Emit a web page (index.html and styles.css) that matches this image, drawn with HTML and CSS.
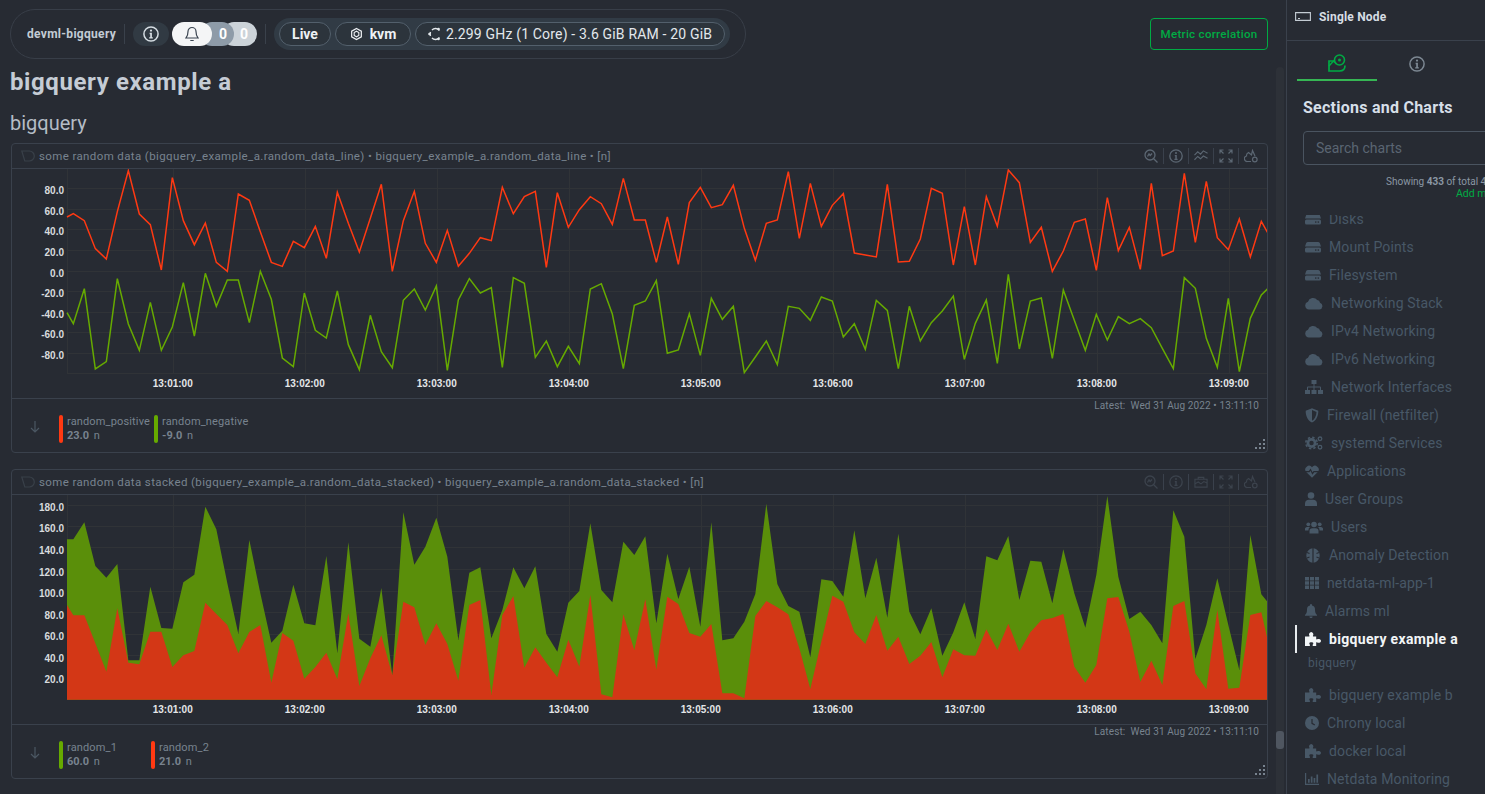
FILE: index.html
```html
<!DOCTYPE html>
<html lang="en">
<head>
<meta charset="utf-8">
<title>bigquery example a</title>
<link rel="stylesheet" href="styles.css">
</head>
<body>
<svg class="defs" width="0" height="0" aria-hidden="true">
  <defs>
    <symbol id="i-disk" viewBox="0 0 16 11"><path d="M3 0h10q1.2 0 1.8 1L16 4.6H0L1.2 1Q1.8 0 3 0zM1.5 5.6h13A1.5 1.5 0 0 1 16 7.1v2a1.5 1.5 0 0 1-1.5 1.5h-13A1.5 1.5 0 0 1 0 9.1v-2a1.5 1.5 0 0 1 1.5-1.5z"/><circle class="cut" cx="10.8" cy="8.1" r=".8"/><circle class="cut" cx="13.3" cy="8.1" r=".8"/></symbol>
    <symbol id="i-cloud" viewBox="0 0 18 13"><path d="M4 12.6A4 4 0 0 1 3 4.8 5.2 5.2 0 0 1 12.2 3 3.3 3.3 0 0 1 15 5.8a3.5 3.5 0 0 1-.7 6.8z"/></symbol>
    <symbol id="i-net" viewBox="0 0 18 14"><path d="M6.5 0h5v4h-2v2.5H15a1 1 0 0 1 1 1V10h2v4h-5v-4h2V7.5H9.5V10h2v4h-5v-4h2V7.5H3V10h2v4H0v-4h2V7.5a1 1 0 0 1 1-1h5.500V4h-2z"/></symbol>
    <symbol id="i-shield" viewBox="0 0 14 15"><path d="M7 .3l6.300 2.400C13.500 8 11 12.600 7 14.600 3 12.600.5 8 .7 2.700zM7 2v10.800c2.600-1.600 4.400-5 4.500-8.900z"/></symbol>
    <symbol id="i-cogs" viewBox="0 0 18 14"><circle cx="6.500" cy="7" r="3.600" fill="none" stroke="currentColor" stroke-width="2.700"/><circle cx="6.500" cy="7" r="5.700" fill="none" stroke="currentColor" stroke-width="1.600" stroke-dasharray="2.400 2.080"/><circle cx="15" cy="2.800" r="1.800" fill="none" stroke="currentColor" stroke-width="1.300"/><circle cx="15" cy="11.200" r="1.800" fill="none" stroke="currentColor" stroke-width="1.300"/></symbol>
    <symbol id="i-heart" viewBox="0 0 14 13"><path d="M7 12.800L1.200 7A3.700 3.700 0 0 1 7 2.200 3.700 3.700 0 0 1 12.800 7z"/><path class="cutline" d="M0 6.600h4.200l1.300-2 2 4 1.400-2H14"/></symbol>
    <symbol id="i-user" viewBox="0 0 12 14"><circle cx="6" cy="3.500" r="3.300"/><path d="M0 14v-2.500a4 4 0 0 1 4-3.700h4a4 4 0 0 1 4 3.700V14z"/></symbol>
    <symbol id="i-users" viewBox="0 0 18 13"><circle cx="9" cy="3.500" r="2.800"/><circle cx="3.300" cy="3.300" r="1.900"/><circle cx="14.700" cy="3.300" r="1.900"/><path d="M4.500 12.500v-2A3 3 0 0 1 7.500 7.300h3a3 3 0 0 1 3 3.200v2zM0 9.500A2.500 2.500 0 0 1 2.500 6H5a4 4 0 0 0-1.500 3.500H0zM18 9.500A2.500 2.500 0 0 0 15.500 6H13a4 4 0 0 1 1.500 3.500H18z"/></symbol>
    <symbol id="i-brain" viewBox="0 0 16 15"><path d="M7.400.3v14.400A7.300 7.300 0 0 1 7.400.3zM8.600.3a7.300 7.300 0 0 1 0 14.400z"/><path class="cutline" d="M2 4.500l2.500 1M2 10l2.500-1M14 4.500l-2.500 1M14 10l-2.500-1"/></symbol>
    <symbol id="i-grid" viewBox="0 0 14 12"><path d="M0 0h4v3.500H0zM5 0h4v3.500H5zM10 0h4v3.500h-4zM0 4.250h4v3.500H0zM5 4.250h4v3.500H5zM10 4.250h4v3.500h-4zM0 8.500h4V12H0zM5 8.500h4V12H5zM10 8.500h4V12h-4z"/></symbol>
    <symbol id="i-bell" viewBox="0 0 12 14"><path d="M6 0a1 1 0 0 1 1 1v.6A4 4 0 0 1 10 5.500c0 3 .7 4.300 2 5.500v.8H0V11c1.300-1.200 2-2.500 2-5.500a4 4 0 0 1 3-3.900V1a1 1 0 0 1 1-1zM4.400 12.500h3.200a1.600 1.600 0 0 1-3.200 0z"/></symbol>
    <symbol id="i-puzzle" viewBox="0 0 16 14"><path d="M0 4.500h4.200c.5 0 .3-.8 0-1.200C3.600 2.500 4.500 0 6.200 0s2.600 2.500 2 3.300c-.3.400-.5 1.200 0 1.200h3V7c0 .6.700.5 1.100.3.900-.6 3.700-.2 3.700 1.600s-2.800 2.200-3.700 1.600c-.4-.2-1.100-.3-1.100.3V14H7.700v-1.300c0-.6.600-.6.600-1.300 0-1.400-4-1.400-4 0 0 .7.600.7.600 1.300V14H0z"/></symbol>
    <symbol id="i-clock" viewBox="0 0 14 14"><circle cx="7" cy="7" r="7"/><path class="cutline" d="M7 3v4.300l2.800 1.700"/></symbol>
    <symbol id="i-chart" viewBox="0 0 14 12"><path d="M0 0h1.200v10.800H14V12H0zM3 6h1.700v3.800H3zM5.800 3.500h1.700v6.300H5.800zM8.600 5h1.700v4.800H8.600zM11.400 1.500h1.700v8.300h-1.700z"/></symbol>
    <symbol id="t-zoom" viewBox="0 0 14 14"><circle cx="6" cy="6" r="5" fill="none" stroke="currentColor" stroke-width="1.300"/><path fill="none" stroke="currentColor" stroke-width="1.300" d="M9.700 9.700L13.500 13.500M3.500 7.500L5 5l1.200 1.500L8 4.500"/></symbol>
    <symbol id="t-info" viewBox="0 0 14 14"><circle cx="7" cy="7" r="6.200" fill="none" stroke="currentColor" stroke-width="1.300"/><circle cx="7" cy="4" r="1"/><path d="M5.800 6h2v3.800h.8V11H5.400V9.800h.9V7.200h-.5z"/></symbol>
    <symbol id="t-trend" viewBox="0 0 15 14"><path fill="none" stroke="currentColor" stroke-width="1.200" d="M.5 6L4 2.500 7 5l3-3.500L14.500 4M.5 11L4 7.500 7 10l3-3 4.500 2.500"/></symbol>
    <symbol id="t-full" viewBox="0 0 14 14"><path fill="none" stroke="currentColor" stroke-width="1.200" d="M1 4.500V1h3.500M1 1l3.500 3.500M13 4.500V1H9.500M13 1L9.500 4.500M1 9.500V13h3.500M1 13l3.500-3.500M13 9.500V13H9.500M13 13L9.500 9.500"/></symbol>
    <symbol id="t-cloud" viewBox="0 0 14 14"><path fill="none" stroke="currentColor" stroke-width="1.200" d="M7 12.500H3.500A2.800 2.800 0 0 1 2.500 7 3.500 3.500 0 0 1 4.500 3.500L7.500 6 8.500 1.500 11 7"/><circle cx="10.800" cy="10.500" r="2.300" fill="none" stroke="currentColor" stroke-width="1.200"/></symbol>
    <symbol id="t-folder" viewBox="0 0 15 14"><path fill="none" stroke="currentColor" stroke-width="1.200" d="M1 4h13v8.500H1zM4.500 4V2h6v2M1 9l3.500-2 3 2 3-2.500L14 8"/></symbol>
    <symbol id="t-tag" viewBox="0 0 14 12"><path fill="none" stroke="currentColor" stroke-width="1.200" d="M.8 1h7.500a5 5 0 0 1 5 5 5 5 0 0 1-5 5H3.800z"/></symbol>
  </defs>
</svg>

<main class="main">
  <div class="top-row">
    <header class="node-bar">
      <span class="node-name">devml-bigquery</span>
      <span class="vdiv"></span>
      <span class="info-pill"><svg class="ic-info" width="16" height="16"><use href="#t-info"/></svg></span>
      <span class="alarms">
        <span class="alarm alarm-bell"><svg class="ic-bell" width="14" height="16" viewBox="0 0 14 16"><path d="M7 1.500a4 4 0 0 1 4 4c0 3 .6 4.800 2 6.500H1c1.400-1.700 2-3.500 2-6.500a4 4 0 0 1 4-4zM5.300 14.500h3.400" fill="none" stroke="currentColor" stroke-width="1.200"/></svg></span>
        <span class="alarm alarm-crit">0</span>
        <span class="alarm alarm-warn">0</span>
      </span>
      <span class="vdiv vdiv-right"></span>
      <div class="facts">
        <span class="fact fact-live">Live</span>
        <span class="fact fact-kvm"><svg class="ic-kvm" width="13" height="14" viewBox="0 0 14 14"><path d="M7 1l5.200 3v6L7 13l-5.200-3V4z" fill="none" stroke="currentColor" stroke-width="1.300"/><path d="M7 4l2.500 1.500v3L7 10 4.500 8.500v-3z" fill="none" stroke="currentColor" stroke-width="1.200"/></svg>kvm</span>
        <span class="fact fact-cpu"><svg class="ic-cpu" width="13" height="14" viewBox="0 0 13 14"><path d="M11.500 3.500A5 5 0 0 0 4 3M4 11a5 5 0 0 0 7.500-.5M2.500 5a4.500 4.500 0 0 0 0 4" fill="none" stroke="currentColor" stroke-width="1.500"/><circle cx="1.500" cy="7" r="1.300"/><circle cx="10.500" cy="2" r="1.300"/><circle cx="10.500" cy="12" r="1.300"/></svg>2.299 GHz (1 Core) - 3.6 GiB RAM - 20 GiB</span>
      </div>
    </header>
    <button class="metric-btn" type="button">Metric correlation</button>
  </div>

  <h1 class="page-title">bigquery example a</h1>
  <h2 class="section-title">bigquery</h2>

  <section class="card">
    <div class="card-head">
      <svg class="ic-tag" width="14" height="12"><use href="#t-tag"/></svg>
      <span class="card-title">some random data (bigquery_example_a.random_data_line) • bigquery_example_a.random_data_line • [n]</span>
      <div class="tools">
        <svg width="14" height="14"><use href="#t-zoom"/></svg><i></i>
        <svg width="14" height="14"><use href="#t-info"/></svg><i></i>
        <svg width="14" height="14"><use href="#t-trend"/></svg><i></i>
        <svg width="14" height="14"><use href="#t-full"/></svg><i></i>
        <svg width="14" height="14"><use href="#t-cloud"/></svg>
      </div>
    </div>
    <svg class="plot" width="1255" height="229" viewBox="12 169 1255 229">
      <path class="grid" d="M67 188.500H1267M67 209.500H1267M67 229.500H1267M67 250.500H1267M67 271.500H1267M67 291.500H1267M67 312.500H1267M67 332.500H1267M67 353.500H1267M67 373.500H1267M67.500 169V373M173.500 169V373M305.500 169V373M437.500 169V373M569.500 169V373M701.500 169V373M833.500 169V373M965.500 169V373M1097.500 169V373M1229.500 169V373"/>
      <g transform="scale(0.33333)">
        <polyline class="line line-red" points="201,651 220,641 253,662 286,746 319,777 352,635 385,512 418,642 451,674 484,810 517,533 550,662 583,734 616,669 649,787 682,814 715,582 748,601 781,695 814,787 847,799 880,724 913,743 946,679 979,775 1012,577 1045,670 1078,756 1111,655 1144,553 1177,814 1210,662 1243,574 1276,730 1309,787 1342,691 1375,799 1408,760 1441,713 1474,722 1507,562 1540,641 1573,590 1606,574 1639,802 1672,578 1705,682 1738,629 1771,590 1804,611 1837,673 1870,535 1903,660 1936,660 1969,787 2002,651 2035,793 2068,608 2101,562 2134,623 2167,614 2200,556 2233,685 2266,781 2299,670 2332,660 2365,515 2398,715 2431,550 2464,679 2497,616 2530,581 2563,759 2596,765 2629,771 2662,553 2695,786 2728,784 2761,717 2794,565 2827,580 2860,795 2893,620 2926,795 2959,590 2992,679 3025,510 3058,548 3091,727 3124,682 3157,814 3190,753 3223,667 3256,657 3289,811 3322,593 3355,752 3388,682 3421,808 3454,550 3487,767 3520,753 3553,520 3586,727 3619,544 3652,713 3685,749 3718,657 3751,771 3784,664 3804,700"/>
        <polyline class="line line-green" points="201,938 220,971 253,866 286,1107 319,1085 352,836 385,972 418,1051 451,907 484,1051 517,981 550,848 583,1008 616,820 649,919 682,840 715,840 748,968 781,814 814,898 847,1074 880,1100 913,879 946,991 979,1014 1012,873 1045,1034 1078,1109 1111,946 1144,1055 1177,1103 1210,901 1243,867 1276,930 1309,858 1342,1111 1375,900 1408,836 1441,879 1474,863 1507,1102 1540,833 1573,850 1606,1072 1639,1023 1672,1100 1705,1039 1738,1091 1771,867 1804,851 1837,942 1870,1106 1903,916 1936,903 1969,842 2002,1060 2035,1050 2068,941 2101,1066 2134,895 2167,958 2200,919 2233,1118 2266,1071 2299,1023 2332,1094 2365,919 2398,925 2431,961 2464,891 2497,903 2530,1011 2563,971 2596,1048 2629,901 2662,931 2695,1106 2728,919 2761,1023 2794,968 2827,933 2860,888 2893,1078 2926,970 2959,900 2992,1090 3025,823 3058,1047 3091,903 3124,894 3157,1075 3190,870 3223,961 3256,1051 3289,943 3322,1020 3355,950 3388,971 3421,956 3454,983 3487,1045 3520,1106 3553,833 3586,865 3619,1015 3652,1102 3685,895 3718,1115 3751,955 3784,885 3804,865"/>
      </g>
      <g class="y-labels">
        <text x="64" y="194">80.0</text><text x="64" y="215">60.0</text><text x="64" y="235">40.0</text><text x="64" y="256">20.0</text><text x="64" y="277">0.0</text><text x="64" y="297">-20.0</text><text x="64" y="318">-40.0</text><text x="64" y="338">-60.0</text><text x="64" y="359">-80.0</text>
      </g>
      <g class="x-labels">
        <text x="172.700" y="387">13:01:00</text><text x="304.700" y="387">13:02:00</text><text x="436.700" y="387">13:03:00</text><text x="568.700" y="387">13:04:00</text><text x="700.700" y="387">13:05:00</text><text x="832.700" y="387">13:06:00</text><text x="964.700" y="387">13:07:00</text><text x="1096.700" y="387">13:08:00</text><text x="1228.700" y="387">13:09:00</text>
      </g>
    </svg>
    <div class="card-foot">
      <div class="latest">Latest:&nbsp; Wed 31 Aug 2022 • 13:11:10</div>
      <div class="legend">
        <svg class="ic-down" width="10" height="12" viewBox="0 0 10 12"><path d="M5 0v11M1 7l4 4 4-4" fill="none" stroke="currentColor" stroke-width="1.200"/></svg>
        <div class="dim"><span class="swatch sw-red"></span><div><div class="dim-name">random_positive</div><div class="dim-val"><b>23.0</b> n</div></div></div>
        <div class="dim"><span class="swatch sw-green"></span><div><div class="dim-name">random_negative</div><div class="dim-val"><b>-9.0</b> n</div></div></div>
      </div>
      <svg class="grip" width="11" height="10" viewBox="0 0 11 10"><path d="M9 0h2v2H9zM5 4h2v2H5zM9 4h2v2H9zM1 8h2v2H1zM5 8h2v2H5zM9 8h2v2H9z"/></svg>
    </div>
  </section>

  <section class="card card-dim">
    <div class="card-head">
      <svg class="ic-tag" width="14" height="12"><use href="#t-tag"/></svg>
      <span class="card-title">some random data stacked (bigquery_example_a.random_data_stacked) • bigquery_example_a.random_data_stacked • [n]</span>
      <div class="tools">
        <svg width="14" height="14"><use href="#t-zoom"/></svg><i></i>
        <svg width="14" height="14"><use href="#t-info"/></svg><i></i>
        <svg width="14" height="14"><use href="#t-folder"/></svg><i></i>
        <svg width="14" height="14"><use href="#t-full"/></svg><i></i>
        <svg width="14" height="14"><use href="#t-cloud"/></svg>
      </div>
    </div>
    <svg class="plot" width="1255" height="229" viewBox="12 495 1255 229">
      <path class="grid" d="M67 505.500H1267M67 526.500H1267M67 547.500H1267M67 569.500H1267M67 591.500H1267M67 612.500H1267M67 634.500H1267M67 655.500H1267M67 677.500H1267M67.500 495V699M173.500 495V699M305.500 495V699M437.500 495V699M569.500 495V699M701.500 495V699M833.500 495V699M965.500 495V699M1097.500 495V699M1229.500 495V699"/>
      <g transform="scale(0.33333)">
        <polygon class="area-green" points="201,2099 201,1618 220,1618 253,1567 286,1698 319,1733 352,1692 385,1981 418,1981 451,1760 484,1884 517,1886 550,1747 583,1724 616,1520 649,1588 682,1750 715,1902 748,1620 781,1780 814,1928 847,1892 880,1754 913,1870 946,1876 979,1668 1012,1960 1045,1627 1078,1916 1111,1940 1144,1764 1177,2025 1210,1537 1243,1694 1276,1640 1309,1553 1342,1670 1375,1920 1408,1718 1441,1702 1474,1915 1507,1830 1540,1702 1573,1765 1606,1699 1639,1902 1672,1955 1705,1808 1738,1773 1771,1570 1804,1770 1837,1807 1870,1625 1903,1665 1936,1609 1969,1870 2002,1661 2035,1797 2068,1700 2101,1880 2134,1567 2167,1921 2200,1915 2233,1865 2266,1782 2299,1511 2332,1752 2365,1818 2398,1835 2431,1972 2464,1738 2497,1743 2530,1790 2563,1591 2596,1795 2629,1673 2662,1853 2695,1601 2728,1835 2761,1903 2794,1825 2827,1967 2860,1897 2893,1807 2926,1917 2959,1669 2992,1681 3025,1608 3058,1800 3091,1682 3124,1685 3157,1810 3190,1648 3223,1780 3256,1883 3289,1725 3322,1488 3355,1730 3388,1857 3421,1835 3454,1875 3487,1930 3520,1531 3553,1610 3586,1977 3619,1875 3652,1735 3685,1875 3718,2010 3751,1605 3784,1783 3804,1807 3804,2099"/>
        <polygon class="area-red" points="201,2099 201,1815 220,1846 253,1846 286,1930 319,2015 352,1825 385,1988 418,1993 451,1895 484,1895 517,2001 550,1966 583,1953 616,1808 649,1842 682,1875 715,1960 748,1896 781,1875 814,2048 847,1899 880,1922 913,2036 946,2001 979,1958 1012,2038 1045,1840 1078,2058 1111,1975 1144,1906 1177,2026 1210,1805 1243,1822 1276,1935 1309,1870 1342,1932 1375,2042 1408,1815 1441,1800 1474,2085 1507,1845 1540,1788 1573,2003 1606,1942 1639,1988 1672,2032 1705,1919 1738,2000 1771,1785 1804,2083 1837,2092 1870,1843 1903,1951 1936,1798 1969,2009 2002,1790 2035,1812 2068,1899 2101,1910 2134,1872 2167,2080 2200,2080 2233,2095 2266,1848 2299,1803 2332,1822 2365,1843 2398,1945 2431,2067 2464,1925 2497,1787 2530,1805 2563,1897 2596,1932 2629,1845 2662,1952 2695,1910 2728,1992 2761,1967 2794,1926 2827,2032 2860,1948 2893,1966 2926,1967 2959,1888 2992,1950 3025,1871 3058,1955 3091,1897 3124,1861 3157,1854 3190,1842 3223,2000 3256,2048 3289,1995 3322,1795 3355,1791 3388,1895 3421,2046 3454,1982 3487,2055 3520,1818 3553,1803 3586,2020 3619,2068 3652,1830 3685,2066 3718,2063 3751,1845 3784,1837 3804,1925 3804,2099"/>
      </g>
      <g class="y-labels">
        <text x="64" y="511">180.0</text><text x="64" y="532">160.0</text><text x="64" y="554">140.0</text><text x="64" y="576">120.0</text><text x="64" y="597">100.0</text><text x="64" y="619">80.0</text><text x="64" y="640">60.0</text><text x="64" y="662">40.0</text><text x="64" y="683">20.0</text>
      </g>
      <g class="x-labels">
        <text x="172.700" y="713">13:01:00</text><text x="304.700" y="713">13:02:00</text><text x="436.700" y="713">13:03:00</text><text x="568.700" y="713">13:04:00</text><text x="700.700" y="713">13:05:00</text><text x="832.700" y="713">13:06:00</text><text x="964.700" y="713">13:07:00</text><text x="1096.700" y="713">13:08:00</text><text x="1228.700" y="713">13:09:00</text>
      </g>
    </svg>
    <div class="card-foot">
      <div class="latest">Latest:&nbsp; Wed 31 Aug 2022 • 13:11:10</div>
      <div class="legend">
        <svg class="ic-down" width="10" height="12" viewBox="0 0 10 12"><path d="M5 0v11M1 7l4 4 4-4" fill="none" stroke="currentColor" stroke-width="1.200"/></svg>
        <div class="dim dim-wide"><span class="swatch sw-green"></span><div><div class="dim-name">random_1</div><div class="dim-val"><b>60.0</b> n</div></div></div>
        <div class="dim dim-wide"><span class="swatch sw-red"></span><div><div class="dim-name">random_2</div><div class="dim-val"><b>21.0</b> n</div></div></div>
      </div>
      <svg class="grip" width="11" height="10" viewBox="0 0 11 10"><path d="M9 0h2v2H9zM5 4h2v2H5zM9 4h2v2H9zM1 8h2v2H1zM5 8h2v2H5zM9 8h2v2H9z"/></svg>
    </div>
  </section>

  <div class="scroll-track"><span class="scroll-thumb"></span></div>
</main>

<aside class="side">
  <div class="side-head">
    <svg class="ic-node" width="16" height="9" viewBox="0 0 16 9"><path d="M.6.6h14.800v7.800H.6zM3 6.500h2" fill="none" stroke="currentColor" stroke-width="1.100"/></svg>
    <span>Single Node</span>
  </div>
  <div class="tabs">
    <div class="tab tab-on"><svg width="18" height="18" viewBox="0 0 18 18"><path d="M6 7H1v10h10.500c3 0 5.500-1.500 5.500-5.500" fill="none" stroke="currentColor" stroke-width="1.700"/><path d="M1 12l4.500-5 3 3" fill="none" stroke="currentColor" stroke-width="1.500"/><circle cx="11.500" cy="6" r="5" fill="none" stroke="currentColor" stroke-width="1.600"/><circle cx="11.500" cy="6" r="1.500"/></svg></div>
    <div class="tab"><svg width="16" height="16"><use href="#t-info"/></svg></div>
  </div>
  <h3 class="side-title">Sections and Charts</h3>
  <input class="search" type="text" placeholder="Search charts">
  <div class="showing">Showing <b>433</b> of total 433 charts</div>
  <div class="add-more">Add more charts</div>
  <nav class="nav">
    <div class="nav-inner">
      <div class="nav-row"><svg width="16" height="11"><use href="#i-disk"/></svg>Disks</div>
      <div class="nav-row"><svg width="16" height="11"><use href="#i-disk"/></svg>Mount Points</div>
      <div class="nav-row"><svg width="16" height="11"><use href="#i-disk"/></svg>Filesystem</div>
      <div class="nav-row"><svg width="18" height="13"><use href="#i-cloud"/></svg>Networking Stack</div>
      <div class="nav-row"><svg width="18" height="13"><use href="#i-cloud"/></svg>IPv4 Networking</div>
      <div class="nav-row"><svg width="18" height="13"><use href="#i-cloud"/></svg>IPv6 Networking</div>
      <div class="nav-row"><svg width="18" height="14"><use href="#i-net"/></svg>Network Interfaces</div>
      <div class="nav-row"><svg width="14" height="15"><use href="#i-shield"/></svg>Firewall (netfilter)</div>
      <div class="nav-row"><svg width="18" height="14"><use href="#i-cogs"/></svg>systemd Services</div>
      <div class="nav-row"><svg width="14" height="13"><use href="#i-heart"/></svg>Applications</div>
      <div class="nav-row"><svg width="12" height="14"><use href="#i-user"/></svg>User Groups</div>
      <div class="nav-row"><svg width="18" height="13"><use href="#i-users"/></svg>Users</div>
      <div class="nav-row"><svg width="16" height="15"><use href="#i-brain"/></svg>Anomaly Detection</div>
      <div class="nav-row"><svg width="14" height="12"><use href="#i-grid"/></svg>netdata-ml-app-1</div>
      <div class="nav-row"><svg width="12" height="14"><use href="#i-bell"/></svg>Alarms ml</div>
      <div class="nav-row nav-active"><svg width="16" height="14"><use href="#i-puzzle"/></svg>bigquery example a</div>
      <div class="nav-sub">bigquery</div>
      <div class="nav-row"><svg width="16" height="14"><use href="#i-puzzle"/></svg>bigquery example b</div>
      <div class="nav-row"><svg width="14" height="14"><use href="#i-clock"/></svg>Chrony local</div>
      <div class="nav-row"><svg width="16" height="14"><use href="#i-puzzle"/></svg>docker local</div>
      <div class="nav-row"><svg width="14" height="12"><use href="#i-chart"/></svg>Netdata Monitoring</div>
    </div>
  </nav>
</aside>
</body>
</html>
```
FILE: styles.css
```css
* { box-sizing: border-box; }
html, body { height: 100%; }
body {
  margin: 0;
  display: flex;
  height: 794px;
  overflow: hidden;
  background: #272b33;
  color: #b8c2cc;
  font-family: Roboto, "Noto Sans", sans-serif;
  font-size: 14px;
}
svg { fill: currentColor; }
.defs { position: absolute; }
.cut { fill: #272b33; }
.cutline { fill: none; stroke: #272b33; stroke-width: 1.2; }

.main {
  position: relative;
  flex: 0 0 1287px;
  width: 1287px;
  padding: 9px 0 0 10px;
  border-right: 1px solid #3a414c;
}
.top-row { display: flex; justify-content: space-between; align-items: flex-start; width: 1258px; }
.node-bar {
  display: flex;
  align-items: center;
  width: 736px;
  height: 50px;
  padding-left: 16px;
  border: 1px solid #383e48;
  border-radius: 25px;
}
.node-name { width: 90px; font-size: 12px; letter-spacing: .3px; font-weight: 700; color: #c3ccd5; white-space: nowrap; }
.vdiv { width: 1px; height: 20px; margin-left: 7px; background: #3a414b; }
.vdiv-right { margin-left: 8px; }
.info-pill {
  display: flex; align-items: center; justify-content: center;
  width: 36px; height: 24px; margin-left: 8px;
  border-radius: 12px; background: #313a43; color: #d6dde3;
}
.alarms { display: flex; margin-left: 3px; }
.alarm {
  display: flex; align-items: center; justify-content: center;
  height: 24px; border-radius: 12px;
  font-size: 14px; font-weight: 700; color: #fff;
}
.alarm-bell { width: 40px; background: #f4f5f6; color: #3a4450; z-index: 3; }
.alarm-crit { width: 34px; margin-left: -12px; padding-left: 12px; background: #8e9ba8; z-index: 2; }
.alarm-warn { width: 35px; margin-left: -12px; padding-left: 9px; background: #ccd3d9; z-index: 1; }
.facts {
  display: flex; align-items: center; gap: 4px;
  height: 32px; margin-left: 8px; padding: 0 5px;
  border-radius: 16px; background: #313b45;
}
.fact {
  display: flex; align-items: center; justify-content: center; gap: 7px;
  height: 24px;
  border: 1px solid #53606c; border-radius: 12px;
  background: #2c343c; color: #eef1f4;
  white-space: nowrap;
}
.fact-live { width: 52px; font-weight: 700; }
.fact-kvm { width: 76px; font-weight: 700; }
.fact-cpu { width: 310px; gap: 5px; color: #e3e8ec; letter-spacing: .17px; }
.metric-btn {
  width: 118px; height: 32px; margin-top: 9px; padding: 0;
  border: 1px solid #00ab44; border-radius: 4px;
  background: transparent; color: #00ab44;
  font: 500 11.5px Roboto, sans-serif; letter-spacing: .3px;
}
.page-title { margin: 7px 0 0; font-size: 24px; line-height: 32px; font-weight: 700; letter-spacing: .6px; color: #c5ccd5; }
.section-title { margin: 12px 0 0; font-size: 20px; line-height: 26px; font-weight: 400; color: #b4bcc5; }

.card {
  width: 1257px; height: 310px; margin: 7px 0 16px 1px;
  border: 1px solid #3a414c; border-radius: 4px;
}
.card-head {
  display: flex; align-items: center;
  height: 25px; padding: 0 9px 0 9px;
  border-bottom: 1px solid #3a414c;
  color: #394049;
}
.card-title { margin-left: 4px; font-size: 11.5px; letter-spacing: .38px; color: #78838f; white-space: nowrap; flex: 1; }
.tools { display: flex; align-items: center; color: #5c6773; }
.tools i { width: 1px; height: 16px; margin: 0 5px; background: #3a414c; }
.card-dim .tools { color: #3c434d; }
.plot { display: block; }
.grid { fill: none; stroke: #303337; stroke-width: 1; }
.line { fill: none; stroke-width: 4.5; stroke-linejoin: miter; }
.line-red { stroke: #ff3912; }
.line-green { stroke: #66aa00; }
.area-green { fill: #5a8f0a; }
.area-red { fill: #d33716; }
.y-labels text { font: 700 10px "Liberation Sans", sans-serif; fill: #d8dbde; text-anchor: end; }
.x-labels text { font: 700 10px "Liberation Sans", sans-serif; fill: #e4e6e8; text-anchor: middle; }
.card-foot {
  position: relative;
  height: 54px;
  border-top: 1px solid #3a414c;
}
.latest { padding: 0 8px 0 0; text-align: right; font-size: 10px; line-height: 13px; color: #78838f; letter-spacing: .12px; }
.legend { display: flex; align-items: center; margin-top: 3px; padding-left: 18px; }
.ic-down { margin: 0 19px 4px 0; color: #4b5763; }
.dim { display: flex; gap: 4px; margin-right: 4px; }
.dim-wide { min-width: 88px; }
.swatch { width: 4px; height: 28px; border-radius: 2px; }
.sw-red { background: #ff3912; }
.sw-green { background: #66aa00; }
.dim-name { font-size: 11px; line-height: 14px; color: #78838f; letter-spacing: .15px; white-space: nowrap; }
.dim-val { font-size: 11px; line-height: 14px; color: #78838f; }
.dim-val b { font-weight: 700; margin-right: 2px; }
.grip { position: absolute; right: 2px; bottom: 3px; fill: #78838f; }
.scroll-track { position: absolute; top: 67px; right: 2px; bottom: 0; width: 8px; border-radius: 4px 4px 0 0; background: #2d3138; }
.scroll-thumb { position: absolute; top: 664px; left: 0; width: 8px; height: 18px; border-radius: 3px; background: #4f5660; }

.side { flex: 0 0 198px; width: 198px; display: flex; flex-direction: column; overflow: hidden; }
.side-head {
  display: flex; align-items: center; gap: 8px; flex: none;
  height: 41px; padding: 0 0 7px 8px;
  border-bottom: 1px solid #3a414c;
  font-size: 12px; letter-spacing: .2px; font-weight: 700; color: #d6dde3;
}
.ic-node { color: #c4ccd4; }
.tabs { display: flex; flex: none; height: 40px; margin-left: 10px; }
.tab { display: flex; align-items: center; justify-content: center; width: 80px; height: 40px; padding-top: 5px; color: #7d8893; }
.tab-on { border-bottom: 2px solid #36b654; color: #00ab44; }
.side-title { flex: none; margin: 17px 0 0 16px; font-size: 16px; letter-spacing: .25px; line-height: 20px; font-weight: 700; color: #d6dfe8; white-space: nowrap; }
.search {
  flex: none; width: 300px; height: 34px; margin: 13px 0 0 16px; padding: 0 12px;
  border: 1px solid #4a5460; border-radius: 4px;
  background: transparent; color: #b8c2cc;
  font: 14px Roboto, sans-serif;
}
.search::placeholder { color: #5a6572; opacity: 1; }
.showing { flex: none; margin: 11px 0 0 99px; font-size: 10px; line-height: 12px; color: #8a97a4; white-space: nowrap; }
.add-more { flex: none; margin-left: 169px; font-size: 10.5px; line-height: 12px; color: #00ab44; white-space: nowrap; }
.nav { flex: 1; margin-top: 15px; overflow: hidden; }
.nav-inner { margin-top: -10px; padding-left: 18px; }
.nav-row {
  position: relative;
  display: flex; align-items: center; gap: 8px;
  height: 28px;
  color: #485867;
  letter-spacing: .13px; white-space: nowrap;
}
.nav-active { color: #f2f5f7; font-weight: 700; letter-spacing: .33px; }
.nav-active::before { content: ""; position: absolute; left: -10px; top: 0; width: 2px; height: 28px; background: #e8ecef; }
.nav-sub { height: 28px; padding-left: 3px; font-size: 12px; line-height: 20px; color: #485867; letter-spacing: .3px; }
```
